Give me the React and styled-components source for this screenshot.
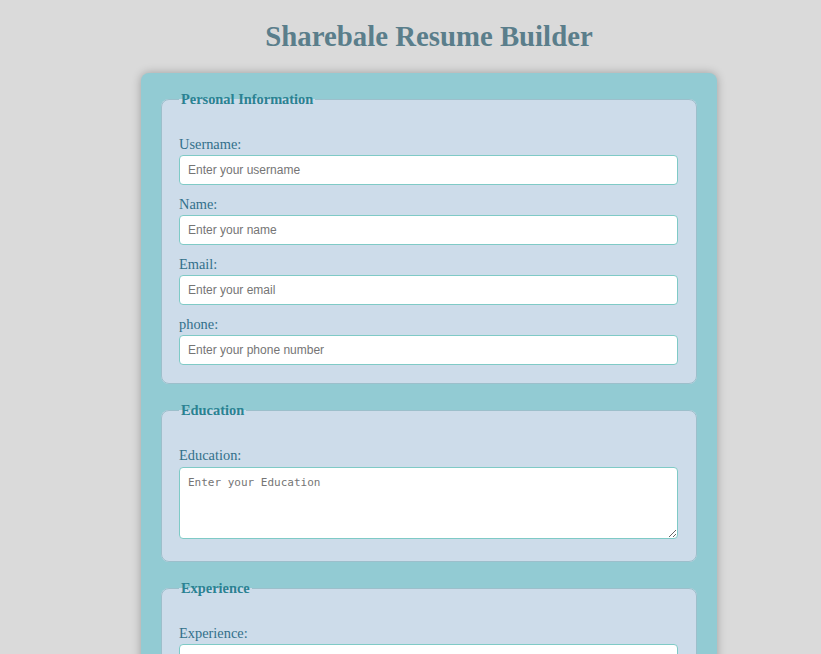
import styled, { createGlobalStyle } from "styled-components";
import { useState } from "react";

const GlobalStyle = createGlobalStyle`
  html {
    scrollbar-width: none;
    background: #dadada;
  }
  body {
    margin: 0;
    background: #dadada;
    font-family: "Liberation Serif", "Times New Roman", serif;
  }
`;

const Page = styled.div`
  display: flex;
  flex-direction: column;
  align-items: center;
  padding-left: 37px;
  padding-bottom: 40px;
`;

const Title = styled.h1`
  margin: 20px 0;
  font-size: 28.8px;
  font-weight: bold;
  color: #5a7e8b;
`;

const Form = styled.form`
  width: 576px;
  box-sizing: border-box;
  padding: 18px 20px 20px;
  background: #92cbd3;
  border-radius: 8px;
  box-shadow: 0 0 10px rgba(0, 0, 0, 0.28);
`;

const Section = styled.fieldset`
  margin: 0 0 18px;
  padding: 28px 18px 7px 17px;
  background: #cddcea;
  border: 1px solid #9cbfcb;
  border-radius: 8px;
`;

const Legend = styled.legend`
  padding: 0 2px;
  font-size: 14.4px;
  font-weight: bold;
  color: #2a8292;
`;

const Label = styled.label`
  display: block;
  margin-bottom: 2px;
  font-size: 14.4px;
  line-height: 17px;
  color: #33708a;
`;

const Input = styled.input`
  display: block;
  width: 100%;
  height: 30px;
  box-sizing: border-box;
  margin: 0 0 11px;
  padding: 0 8px;
  font-family: "Liberation Sans", Arial, sans-serif;
  font-size: 12px;
  background: #ffffff;
  border: 1px solid #7fcac6;
  border-radius: 4px;
  outline: none;

  &::placeholder {
    color: #757575;
  }
`;

const TextArea = styled.textarea`
  display: block;
  width: 100%;
  height: 72px;
  box-sizing: border-box;
  margin: 3px 0 15px;
  padding: 8px 8px 6px;
  font-family: "DejaVu Sans Mono", monospace;
  font-size: 11px;
  background: #ffffff;
  border: 1px solid #7fcac6;
  border-radius: 4px;
  outline: none;

  &::placeholder {
    color: #757575;
  }
`;

const SubmitButton = styled.button`
  display: block;
  margin: 0 auto;
  padding: 10px 24px;
  font-family: "Liberation Serif", serif;
  font-size: 15px;
  font-weight: bold;
  color: #ffffff;
  background: #2a8292;
  border: none;
  border-radius: 5px;
  cursor: pointer;
`;

const personalFields = [
  { id: "username", label: "Username:", type: "text", placeholder: "Enter your username" },
  { id: "name", label: "Name:", type: "text", placeholder: "Enter your name" },
  { id: "email", label: "Email:", type: "email", placeholder: "Enter your email" },
  { id: "phone", label: "phone:", type: "tel", placeholder: "Enter your phone number" },
];

function App() {
  const [values, setValues] = useState({});

  const update = (key) => (e) => setValues({ ...values, [key]: e.target.value });

  return (
    <Page>
      <GlobalStyle />
      <Title>Sharebale Resume Builder</Title>
      <Form onSubmit={(e) => e.preventDefault()}>
        <Section>
          <Legend>Personal Information</Legend>
          {personalFields.map((f) => (
            <div key={f.id}>
              <Label htmlFor={f.id}>{f.label}</Label>
              <Input
                id={f.id}
                type={f.type}
                placeholder={f.placeholder}
                value={values[f.id] || ""}
                onChange={update(f.id)}
              />
            </div>
          ))}
        </Section>

        <Section>
          <Legend>Education</Legend>
          <Label htmlFor="education">Education:</Label>
          <TextArea
            id="education"
            placeholder="Enter your Education"
            value={values.education || ""}
            onChange={update("education")}
          />
        </Section>

        <Section>
          <Legend>Experience</Legend>
          <Label htmlFor="experience">Experience:</Label>
          <Input
            id="experience"
            type="text"
            placeholder="Enter your Experience"
            value={values.experience || ""}
            onChange={update("experience")}
          />
        </Section>

        <Section>
          <Legend>Skills</Legend>
          <Label htmlFor="skills">Skills:</Label>
          <TextArea
            id="skills"
            placeholder="Enter your Skills"
            value={values.skills || ""}
            onChange={update("skills")}
          />
        </Section>

        <SubmitButton type="submit">Generate Resume</SubmitButton>
      </Form>
    </Page>
  );
}

export default App;
